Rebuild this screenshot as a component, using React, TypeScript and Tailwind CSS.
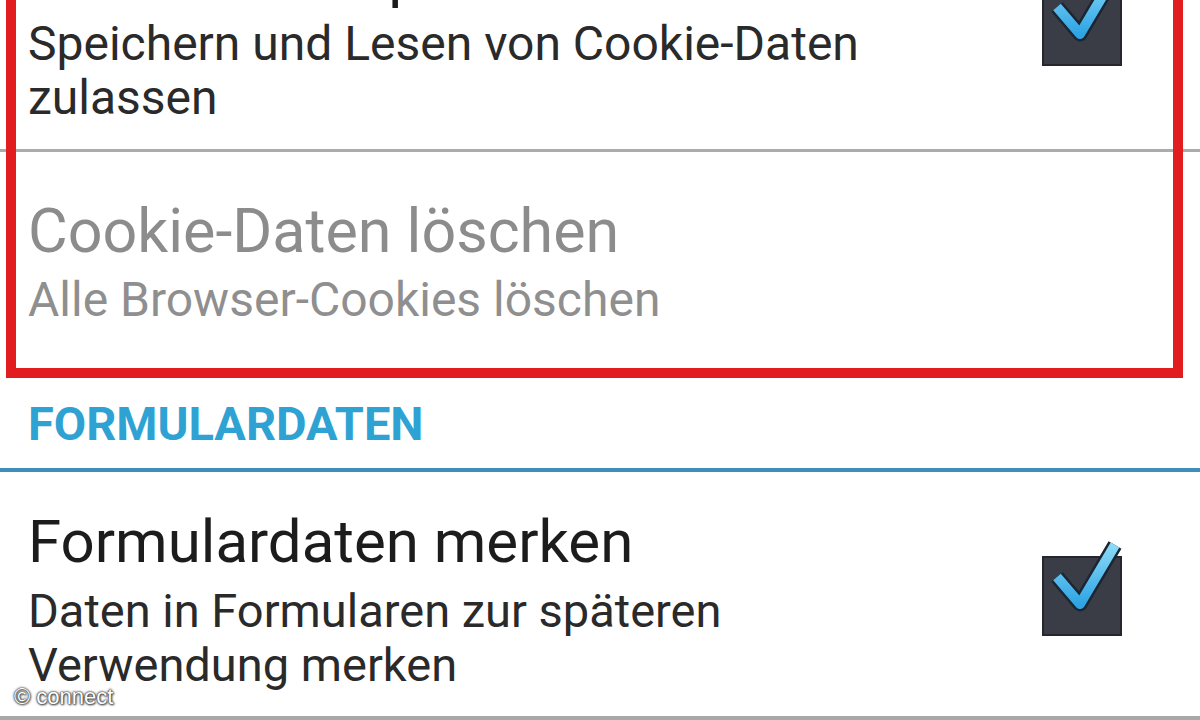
import React from "react";

type PrefItem = {
  title: string;
  summary: string;
  disabled?: boolean;
  checked?: boolean;
};

function CheckBox({ className = "" }: { className?: string }) {
  return (
    <div className={`relative h-[80px] w-[80px] shrink-0 border-2 border-[#25272c] bg-[#3a3d46] ${className}`}>
      <svg
        className="absolute left-[-2px] top-[-22px] h-[100px] w-[96px] overflow-visible"
        viewBox="0 -20 96 100"
      >
        <defs>
          <linearGradient id="chk" x1="0" y1="0" x2="0" y2="1">
            <stop offset="0" stopColor="#8adbf8" />
            <stop offset="1" stopColor="#2fa4e4" />
          </linearGradient>
        </defs>
        <path d="M15 21 L38 48 L73 -11" fill="none" stroke="#1b2633" strokeWidth="15" strokeLinejoin="round" />
        <path d="M15 21 L38 48 L73 -11" fill="none" stroke="url(#chk)" strokeWidth="10" strokeLinejoin="round" />
      </svg>
    </div>
  );
}

function Pref({
  item,
  className,
  boxClass,
  titleSize = "text-[61px]",
  summarySize = "text-[48px]",
}: {
  item: PrefItem;
  className: string;
  boxClass?: string;
  titleSize?: string;
  summarySize?: string;
}) {
  return (
    <div className={`flex items-center pl-[28px] pr-[78px] ${className}`}>
      <div className="min-w-0 flex-1 pr-[80px]">
        <p className={`${titleSize} leading-[84px] ${item.disabled ? "text-[#8c8c8c]" : "text-[#1c1c1c]"}`}>
          {item.title}
        </p>
        <p className={`${summarySize} leading-[54px] ${item.disabled ? "text-[#8f8f8f]" : "text-[#2a2a2a]"}`}>
          {item.summary}
        </p>
      </div>
      {item.checked && <CheckBox className={boxClass} />}
    </div>
  );
}

export default function App() {
  return (
    <div className="relative h-[720px] w-[1200px] overflow-hidden bg-white font-['Roboto','Noto_Sans',sans-serif]">
      <div className="mt-[-67px]">
        <Pref
          className="pb-[24px]"
          boxClass="mb-[6px]"
          item={{ title: "Cookies akzeptieren", summary: "Speichern und Lesen von Cookie-Daten zulassen", checked: true }}
        />
        <div className="h-[3px] bg-[#ababab]" />
        <Pref
          className="pt-[37px]"
          item={{ title: "Cookie-Daten löschen", summary: "Alle Browser-Cookies löschen", disabled: true }}
        />
        <div className="pl-[28px] pt-[70px] pb-[17px]">
          <p className="text-[47px] font-bold leading-[54px] text-[#2fa2d4]">FORMULARDATEN</p>
        </div>
        <div className="h-[4px] bg-[#3d8fb8]" />
        <Pref
          className="pt-[28px] pb-[24px]"
          titleSize="text-[60px]"
          summarySize="text-[47px]"
          item={{ title: "Formulardaten merken", summary: "Daten in Formularen zur späteren Verwendung merken", checked: true }}
        />
        <div className="h-[4px] bg-[#a8a8a8]" />
      </div>

      {/* red highlight frame */}
      <div className="absolute left-[6px] right-[17px] top-[-30px] h-[408px] border-[10px] border-[#e11d20]" />

      {/* watermark */}
      <div className="absolute left-[14px] top-[685px] font-['Liberation_Sans',sans-serif] text-[22px] leading-[24px] text-white [text-shadow:0_0_1px_#333,0_0_2px_#444,0_0_3px_#555,1px_1px_2px_#555]">
        © connect
      </div>
    </div>
  );
}
